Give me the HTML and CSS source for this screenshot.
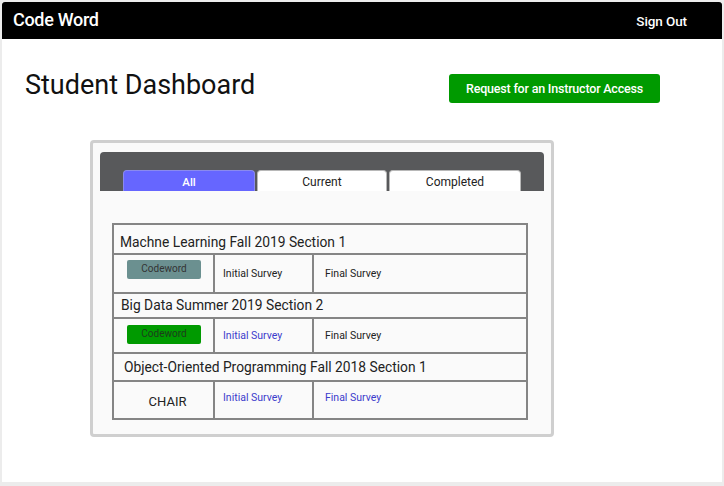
FILE: index.html
```html
<!DOCTYPE html>
<html>
<head>
<meta charset="utf-8">
<link rel="stylesheet" href="styles.css">
</head>
<body>
<div class="page">
  <header class="topbar">
    <span class="brand">Code Word</span>
    <span class="signout">Sign Out</span>
  </header>
  <div class="headrow">
    <h1 class="title">Student Dashboard</h1>
    <button class="btn-request">Request for an Instructor Access</button>
  </div>
  <div class="card">
    <div class="tabbar">
      <div class="tab active">All</div>
      <div class="tab">Current</div>
      <div class="tab">Completed</div>
    </div>
    <table class="courses">
      <colgroup>
        <col class="col1">
        <col class="col2">
        <col class="col3">
      </colgroup>
      <tr class="trow t1"><td colspan="3">Machne Learning Fall 2019 Section 1</td></tr>
      <tr class="drow d1">
        <td class="c1 btncell"><span class="cw gray">Codeword</span></td>
        <td class="c2">Initial Survey</td>
        <td class="c3">Final Survey</td>
      </tr>
      <tr class="trow t2"><td colspan="3">Big Data Summer 2019 Section 2</td></tr>
      <tr class="drow d2">
        <td class="c1 btncell b2"><span class="cw green">Codeword</span></td>
        <td class="c2 link">Initial Survey</td>
        <td class="c3">Final Survey</td>
      </tr>
      <tr class="trow t3"><td colspan="3">Object-Oriented Programming Fall 2018 Section 1</td></tr>
      <tr class="drow d3">
        <td class="c1 chair">CHAIR</td>
        <td class="c2 link top">Initial Survey</td>
        <td class="c3 link top">Final Survey</td>
      </tr>
    </table>
  </div>
</div>
</body>
</html>
```
FILE: styles.css
```css
html, body { margin: 0; padding: 0; }
body {
  background: #ececec;
  font-family: Roboto, "Liberation Sans", sans-serif;
  width: 724px;
  height: 486px;
  overflow: hidden;
}
.page {
  margin: 2px 2px 0 2px;
  width: 720px;
  height: 480px;
  background: #fff;
}
.topbar {
  height: 37px;
  background: #000;
  color: #fff;
  display: flex;
  align-items: center;
  justify-content: space-between;
  padding: 0 35px 0 11px;
  border-radius: 3px 3px 0 0;
}
.brand {
  font-size: 18px;
  font-weight: 500;
  letter-spacing: -0.3px;
  margin-top: -3px;
}
.signout {
  font-size: 13.5px;
  font-weight: 500;
  letter-spacing: -0.1px;
}
.headrow {
  display: flex;
  align-items: flex-start;
  padding: 28px 0 0 23px;
  height: 72px;
  box-sizing: border-box;
}
.title {
  margin: 0;
  font-weight: 400;
  font-size: 27px;
  color: #111;
  line-height: 34px;
  width: 424px;
  margin-top: 1px;
}
.btn-request {
  margin-top: 7px;
  width: 211px;
  height: 29px;
  background: #009a00;
  color: #fff;
  border: none;
  border-radius: 3px;
  font-family: Roboto, "Liberation Sans", sans-serif;
  font-weight: 500;
  font-size: 12.5px;
  letter-spacing: -0.2px;
  padding: 0;
}
.card {
  margin: 29px 0 0 88px;
  border: 3px solid #cfcfcf;
  border-radius: 4px;
  background: #fafafa;
  padding: 9px 0 0 7px;
  box-sizing: border-box;
  width: 464px;
  height: 297px;
}
.tabbar {
  width: 444px;
  height: 39px;
  background: #58595b;
  border-radius: 4px 4px 0 0;
  display: flex;
  align-items: flex-end;
  gap: 2px;
  padding-left: 23px;
  box-sizing: border-box;
}
.tab {
  width: 130px;
  height: 21px;
  background: #fff;
  border: 1px solid #b8b8b8;
  border-bottom: none;
  border-radius: 4px 4px 0 0;
  font-size: 12px;
  color: #222;
  text-align: center;
  line-height: 23px;
  box-sizing: border-box;
}
.tab.active {
  width: 132px;
  background: #6666ff;
  border-color: #8a8aee;
  color: #fff;
  font-weight: 500;
  font-size: 11.5px;
}
.tab:last-child { width: 132px; }
.courses {
  margin: 32px 0 0 12px;
  border-collapse: collapse;
  table-layout: fixed;
  width: 416px;
}
.col1 { width: 101px; }
.col2 { width: 99px; }
.courses td {
  border: 2px solid #858585;
  padding: 0;
  color: #222;
  font-size: 10.5px;
}
.courses .trow td {
  font-size: 13.8px;
  color: #222;
  padding-left: 6px;
}
.courses .t1 td { height: 22px; padding-top: 6px; }
.courses .t2 td { height: 21px; padding-left: 7px; padding-bottom: 2px; }
.courses .t3 td { height: 26px; padding-left: 10px; }
.courses .c1 { text-align: center; }
.courses .c2 { padding-left: 8px; }
.courses .c3 { padding-left: 11px; }
.courses .d1 td { height: 37px; }
.courses .d2 td { height: 33px; }
.courses .d3 td { height: 27px; }
.courses .d1 .btncell { vertical-align: top; padding-top: 5px; height: 32px; }
.courses .d2 .btncell { vertical-align: top; padding-top: 6px; height: 27px; }
.cw {
  display: block;
  margin: 0 auto 0 13px;
  width: 74px;
  height: 19px;
  line-height: 18px;
  border-radius: 2px;
  font-size: 10px;
  color: #333;
}
.cw.gray { background: #6b9090; }
.cw.green { background: #009a00; color: #1c3d1c; }
.courses .link { color: #3c3ccc; }
.courses .top { vertical-align: top; padding-top: 9px; }
.courses .chair { font-size: 13px; padding-top: 3px; padding-left: 8px; }
```
